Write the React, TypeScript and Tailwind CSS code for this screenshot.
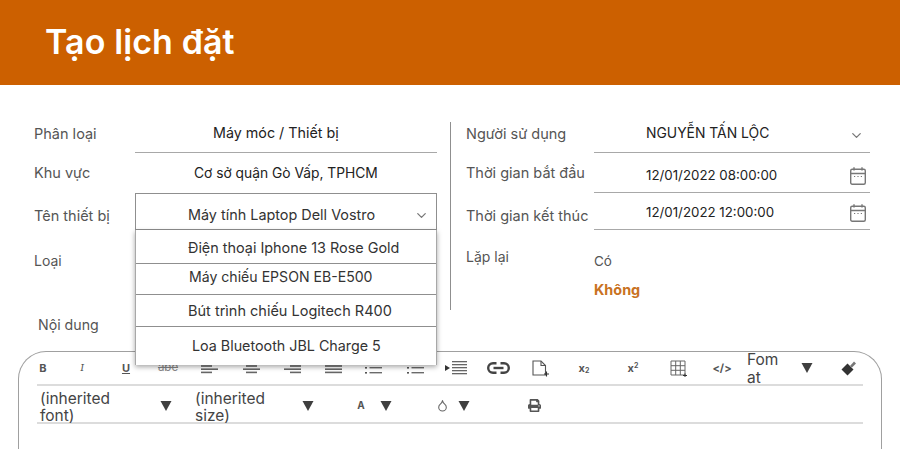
import React from "react";
import { ChevronDown, Droplet } from "lucide-react";
import { FaPrint } from "react-icons/fa";

const font = { fontFamily: '"Inter", "Noto Sans", sans-serif' };

function Tri() {
  return (
    <svg width="12" height="10" viewBox="0 0 12 10" className="shrink-0">
      <polygon points="0.5,0 11.5,0 6,10" fill="#3f3f3f" />
    </svg>
  );
}

function Lines({ rows }: { rows: [number, number][] }) {
  return (
    <svg width="17" height="12" viewBox="0 0 17 12">
      {rows.map(([x, w], i) => (
        <rect key={i} x={x} y={i * 3.2} width={w} height="1.6" fill="#666666" />
      ))}
    </svg>
  );
}

function ListIcon() {
  return (
    <svg width="17" height="12" viewBox="0 0 17 12">
      {[0, 5, 10].map((y) => (
        <g key={y}>
          <rect x="0" y={y} width="2" height="1.6" fill="#555555" />
          <rect x="4.5" y={y} width="12.5" height="1.4" fill="#6b6b6b" />
        </g>
      ))}
    </svg>
  );
}

function CalendarIcon() {
  return (
    <svg width="16" height="18" viewBox="0 0 16 18" fill="none" stroke="#777777" strokeWidth="1.4">
      <rect x="0.7" y="2.2" width="14.6" height="15" rx="1.5" />
      <path d="M0.7 6.5H15.3M4 0.3V3.5M12 0.3V3.5" />
      <path d="M4 9.5H5.2M7.4 9.5H8.6M10.8 9.5H12" strokeWidth="1.2" />
    </svg>
  );
}

function Field({ label, value, pad, right, w, size, labelPad }: { label: string; value: string; pad: string; right?: React.ReactNode; w: string; size: string; labelPad?: string }) {
  return (
    <div className="flex h-full items-center">
      <div className={w + " shrink-0 whitespace-nowrap text-[14.5px] text-[#555555] " + (labelPad || "")}>{label}</div>
      <div className={"flex h-full flex-1 items-center justify-between border-b border-[#a8a8a8] " + pad}>
        <span className={size + " text-[#222222]"}>{value}</span>
        {right}
      </div>
    </div>
  );
}

function Opt({ text, cls, last }: { text: string; cls: string; last?: boolean }) {
  return (
    <div className={cls + " flex items-center text-[#333333]" + (last ? "" : " border-b border-[#8f8f8f]")}>
      {text}
    </div>
  );
}

export default function App() {
  return (
    <div className="h-[449px] w-[900px] overflow-hidden bg-white" style={font}>
      <header className="flex h-[85px] items-center bg-[#cc6000] pb-[2px] pl-[45px]">
        <h1 className="text-[34px] font-semibold tracking-[0.1px] text-white">Tạo lịch đặt</h1>
      </header>

      <main className="flex pl-[34px] pt-[29px]">
        <section className="w-[403px]">
          <div className="h-[39px]">
            <Field label="Phân loại" value="Máy móc / Thiết bị" pad="pl-[78px]" w="w-[101px]" size="text-[14.3px]" />
          </div>
          <div className="h-[40px]">
            <Field label="Khu vực" value="Cơ sở quận Gò Vấp, TPHCM" pad="pl-[59px] border-b-0" w="w-[101px]" size="text-[13.8px]" />
          </div>
          <div className="relative z-10 flex h-[37px] items-center">
            <div className="w-[101px] shrink-0 pt-[8px] text-[14.5px] text-[#555555]">Tên thiết bị</div>
            <div className="flex h-full flex-1 items-center justify-between border border-[#8f8f8f] pl-[52px] pr-[7px] pt-[7px]">
              <span className="text-[14.4px] text-[#333333]">Máy tính Laptop Dell Vostro</span>
              <ChevronDown size={15} color="#777777" />
            </div>
            <div className="absolute left-[101px] right-0 top-[37px] border-x border-[#a8a8a8] bg-white shadow-[0_2px_5px_rgba(0,0,0,0.35)]">
              <Opt text="Điện thoại Iphone 13 Rose Gold" cls="h-[34px] pl-[52px] pt-[3px] text-[14.4px]" />
              <Opt text="Máy chiếu EPSON EB-E500" cls="h-[31px] pl-[53px] pb-[4px] text-[14.1px]" />
              <Opt text="Bút trình chiếu Logitech R400" cls="h-[32px] pl-[52px] text-[14.5px]" />
              <Opt text="Loa Bluetooth JBL Charge 5" cls="h-[38px] pl-[56px] text-[14.3px]" last />
            </div>
          </div>
          <div className="mt-[21px] text-[14px] leading-[20px] text-[#555555]">Loại</div>
          <div className="ml-[4px] mt-[44px] text-[14.2px] leading-[20px] text-[#555555]">Nội dung</div>
        </section>

        <div className="ml-[13px] mt-[8px] h-[188px] w-px bg-[#8f8f8f]" />

        <section className="ml-[15px] w-[404px]">
          <div className="h-[39px]">
            <Field label="Người sử dụng" value="NGUYỄN TẤN LỘC" pad="pl-[52px] pr-[6px]" w="w-[128px]" size="text-[13.9px]" right={<ChevronDown size={15} color="#777777" className="mt-[4px]" />} />
          </div>
          <div className="h-[40px]">
            <Field label="Thời gian bắt đầu" value="12/01/2022 08:00:00" pad="pl-[52px] pr-[4px] pt-[7px]" w="w-[128px]" size="text-[13.3px]" right={<CalendarIcon />} />
          </div>
          <div className="h-[37px]">
            <Field label="Thời gian kết thúc" value="12/01/2022 12:00:00" pad="pl-[52px] pr-[4px] pt-[4px]" w="w-[128px]" size="text-[13.3px]" labelPad="pt-[8px]" right={<CalendarIcon />} />
          </div>
          <div className="mt-[17px] flex">
            <div className="w-[128px] text-[14px] leading-[20px] text-[#555555]">Lặp lại</div>
            <div className="mt-[4px] text-[13.5px]">
              <div className="leading-[20px] text-[#555555]">Có</div>
              <div className="mt-[9px] text-[14.4px] font-bold leading-[20px] text-[#c9721f]">Không</div>
            </div>
          </div>
        </section>
      </main>

      <section className="mx-[18px] mt-[16px] h-[120px] rounded-t-[28px] border border-b-0 border-[#a0a0a0] px-[18px]">
        <div className="flex h-[34px] items-center border-b-2 border-[#dcdcdc] text-[#555555]">
          <div className="flex w-[12px] justify-center text-[11px] font-bold">B</div>
          <div className="ml-[21px] flex w-[24px] justify-center font-serif text-[11px] italic">I</div>
          <div className="ml-[20px] flex w-[24px] justify-center text-[11px] font-bold underline">U</div>
          <div className="ml-[18px] flex w-[24px] justify-center text-[11.5px] text-[#888888] line-through">abe</div>
          <div className="ml-[17px] flex w-[24px] justify-center"><Lines rows={[[0, 17], [0, 11], [0, 17], [0, 11]]} /></div>
          <div className="ml-[18px] flex w-[24px] justify-center"><Lines rows={[[0, 17], [3, 11], [0, 17], [3, 11]]} /></div>
          <div className="ml-[17px] flex w-[24px] justify-center"><Lines rows={[[0, 17], [6, 11], [0, 17], [6, 11]]} /></div>
          <div className="ml-[17px] flex w-[24px] justify-center"><Lines rows={[[0, 17], [0, 17], [0, 17], [0, 17]]} /></div>
          <div className="ml-[16px] flex w-[24px] justify-center"><ListIcon /></div>
          <div className="ml-[18px] flex w-[24px] justify-center"><ListIcon /></div>
          <div className="ml-[17px] flex w-[24px] justify-center">
            <svg width="22" height="14" viewBox="0 0 22 14">
              <polygon points="0,4 5,7 0,10" fill="#333333" />
              {[0, 3, 6, 9, 12].map((y) => <rect key={y} x="7" y={y} width="15" height="1.3" fill="#666666" />)}
            </svg>
          </div>
          <div className="ml-[18px] flex w-[24px] justify-center">
            <svg width="23" height="12" viewBox="0 0 23 12" fill="none" stroke="#444444" strokeWidth="2.4">
              <path d="M9.5 1.2H6A4.8 4.8 0 0 0 6 10.8H9.5" />
              <path d="M13.5 1.2H17A4.8 4.8 0 0 1 17 10.8H13.5" />
              <path d="M6.5 6H16.5" />
            </svg>
          </div>
          <div className="ml-[18px] flex w-[24px] justify-center">
            <svg width="17" height="17" viewBox="0 0 17 17" fill="none" stroke="#555555" strokeWidth="1.1">
              <path d="M1 1H9L13.5 5.5V15H1Z" />
              <path d="M9 1V5.5H13.5" />
              <path d="M12 14H17M14.5 11.5V16.5" stroke="#333333" />
            </svg>
          </div>
          <div className="ml-[20px] w-[24px] text-center text-[11px] font-bold leading-none">
            <span>x<sub className="text-[7px]">2</sub></span>
          </div>
          <div className="ml-[25px] w-[24px] text-center text-[11px] font-bold leading-none">
            <span>x<sup className="text-[7px]">2</sup></span>
          </div>
          <div className="ml-[21px] flex w-[24px] justify-center">
            <svg width="17" height="17" viewBox="0 0 17 17" fill="none" stroke="#666666" strokeWidth="1">
              <path d="M1 1H15V15H1ZM1 5.7H15M1 10.3H15M5.7 1V15M10.3 1V15" />
              <path d="M13 15.5H17M15 13.5V17" stroke="#333333" />
            </svg>
          </div>
          <div className="ml-[20px] flex w-[24px] justify-center text-[11px] font-bold">&lt;/&gt;</div>
          <div className="ml-[13px] mt-[2px] w-[38px] text-[15.5px] leading-[18px] text-[#444444]">Fom at</div>
          <div className="ml-[10px] flex w-[24px] justify-center"><Tri /></div>
          <div className="ml-[18px] flex w-[24px] justify-center">
            <svg width="16" height="16" viewBox="0 0 16 16">
              <path d="M0.5 9.5L6.5 3.5L12.5 9.5L6.5 15.5Z" fill="#333333" />
              <path d="M9 6L13 1.5L15 3.5L11 7.5Z" fill="#777777" />
            </svg>
          </div>
        </div>
        <div className="flex h-[38px] items-center border-b-2 border-[#dcdcdc] pt-[3px]">
          <div className="ml-[3px] mt-[3px] w-[90px] text-[15.5px] leading-[17px] text-[#444444]">(inherited font)</div>
          <div className="ml-[24px] flex w-[24px] justify-center"><Tri /></div>
          <div className="ml-[17px] mt-[3px] w-[90px] text-[15.5px] leading-[17px] text-[#444444]">(inherited size)</div>
          <div className="ml-[11px] flex w-[24px] justify-center"><Tri /></div>
          <div className="ml-[29px] flex w-[24px] justify-center text-[10px] font-bold text-[#555555]">A</div>
          <div className="ml-[1px] flex w-[24px] justify-center"><Tri /></div>
          <div className="ml-[36px] flex w-[16px] justify-center"><Droplet size={13} color="#666666" /></div>
          <div className="ml-[2px] flex w-[24px] justify-center"><Tri /></div>
          <div className="ml-[46px] flex w-[24px] justify-center"><FaPrint size={13} color="#555555" /></div>
        </div>
      </section>
    </div>
  );
}
